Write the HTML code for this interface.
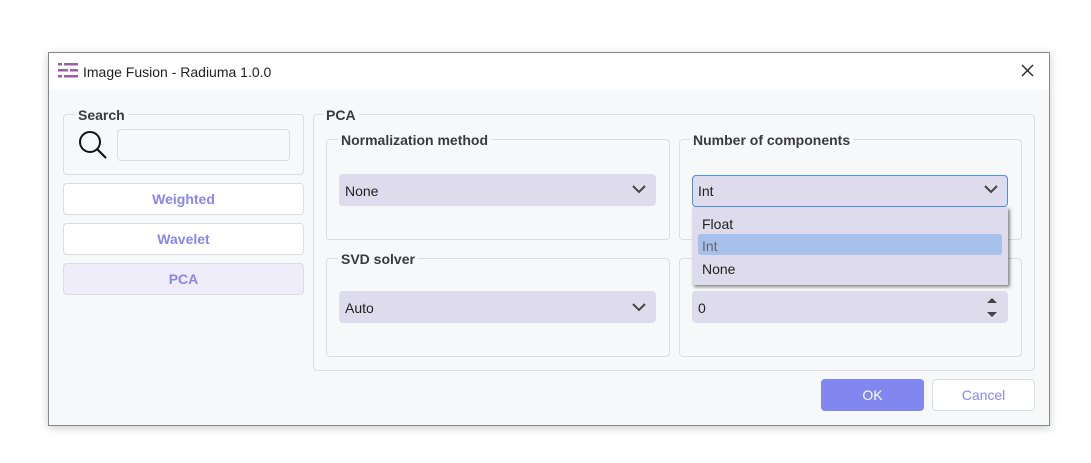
<!DOCTYPE html>
<html><head><style>
*{box-sizing:border-box;margin:0;padding:0}
body{width:1091px;height:463px;background:#fff;font-family:"Liberation Sans",sans-serif;position:relative;overflow:hidden;font-size:14px;color:#222}
.a{position:absolute}
.win{left:48px;top:52px;width:1002px;height:374px;border:1px solid #888;background:#f7f8fa;box-shadow:0 2px 8px rgba(0,0,0,.2)}
.title{left:49px;top:53px;width:1000px;height:37px;background:#fff}
.gb{border:1px solid #dcdde0;border-radius:4px}
.gt{font-weight:bold;color:#3a3a3a;background:#f7f8fa;padding:0 3px;font-size:14px}
.btn{border:1px solid #dcdde0;border-radius:4px;background:#fff;color:#8a86ee;font-weight:bold;text-align:center;line-height:31px;font-size:14px}
.cb{background:#dedcec;border-radius:4px;padding-left:6px;line-height:34px;font-size:14px}
</style></head><body>
<div class="a win"></div>
<div class="a title"></div>
<svg class="a" style="left:58px;top:63px" width="20" height="16"><g fill="#9a5fa5"><rect x="0" y="0" width="4" height="2.5"/><rect x="6" y="0" width="14" height="2.5"/><rect x="0" y="6" width="10" height="2.5"/><rect x="12" y="6" width="8" height="2.5"/><rect x="0" y="12" width="4" height="2.5"/><rect x="6" y="12" width="14" height="2.5"/></g></svg>
<div class="a" style="left:83px;top:64px;font-size:14px">Image Fusion - Radiuma 1.0.0</div>
<svg class="a" style="left:1021px;top:64px" width="13" height="13"><path d="M1 1L12 12M12 1L1 12" stroke="#222" stroke-width="1.3"/></svg>

<div class="a gb" style="left:63px;top:114px;width:241px;height:61px"></div>
<div class="a gt" style="left:75px;top:107px">Search</div>
<svg class="a" style="left:77px;top:129px" width="32" height="32"><circle cx="13" cy="13" r="10" fill="none" stroke="#111" stroke-width="2"/><path d="M20 20L29 29" stroke="#111" stroke-width="2.2"/></svg>
<div class="a" style="left:117px;top:129px;width:173px;height:32px;border:1px solid #dcdde0;border-radius:4px;background:#f7f8fa"></div>
<div class="a btn" style="left:63px;top:183px;width:241px;height:32px">Weighted</div>
<div class="a btn" style="left:63px;top:223px;width:241px;height:32px">Wavelet</div>
<div class="a btn" style="left:63px;top:263px;width:241px;height:32px;background:#efedfa">PCA</div>

<div class="a gb" style="left:313px;top:114px;width:722px;height:257px"></div>
<div class="a gt" style="left:323px;top:107px">PCA</div>

<div class="a gb" style="left:326px;top:139px;width:344px;height:101px"></div>
<div class="a gt" style="left:338px;top:132px">Normalization method</div>
<div class="a cb" style="left:339px;top:174px;width:317px;height:32px">None</div>
<svg class="a" style="left:632px;top:185px" width="14" height="9"><path d="M1 1L7 7L13 1" fill="none" stroke="#444" stroke-width="2"/></svg>

<div class="a gb" style="left:679px;top:139px;width:343px;height:101px"></div>
<div class="a gt" style="left:690px;top:132px">Number of components</div>
<div class="a cb" style="left:692px;top:175px;width:316px;height:32px;border:1px solid #4a8fe8;line-height:31px;padding-left:5px">Int</div>
<svg class="a" style="left:984px;top:185px" width="14" height="9"><path d="M1 1L7 7L13 1" fill="none" stroke="#444" stroke-width="2"/></svg>

<div class="a gb" style="left:326px;top:258px;width:344px;height:99px"></div>
<div class="a gt" style="left:338px;top:251px">SVD solver</div>
<div class="a cb" style="left:339px;top:291px;width:317px;height:32px">Auto</div>
<svg class="a" style="left:632px;top:303px" width="14" height="9"><path d="M1 1L7 7L13 1" fill="none" stroke="#444" stroke-width="2"/></svg>

<div class="a gb" style="left:679px;top:258px;width:343px;height:99px"></div>
<div class="a cb" style="left:692px;top:291px;width:316px;height:32px">0</div>
<svg class="a" style="left:986px;top:297px" width="12" height="22"><path d="M1 6L6 1L11 6Z M1 15L6 20L11 15Z" fill="#444"/></svg>

<div class="a" style="left:692px;top:207px;width:316px;height:78px;background:#dedcec;box-shadow:2px 2px 3px rgba(0,0,0,.45)"></div>
<div class="a" style="left:698px;top:234px;width:304px;height:21px;background:#a7c0ec;border-radius:3px"></div>
<div class="a" style="left:702px;top:216px">Float</div>
<div class="a" style="left:702px;top:238px;color:#666">Int</div>
<div class="a" style="left:702px;top:261px">None</div>

<div class="a" style="left:821px;top:379px;width:103px;height:32px;background:#8287ef;border-radius:4px;color:#fff;text-align:center;line-height:33px">OK</div>
<div class="a" style="left:932px;top:379px;width:103px;height:32px;background:#fff;border:1px solid #dcdde0;border-radius:4px;color:#8a86ee;text-align:center;line-height:31px">Cancel</div>
</body></html>
